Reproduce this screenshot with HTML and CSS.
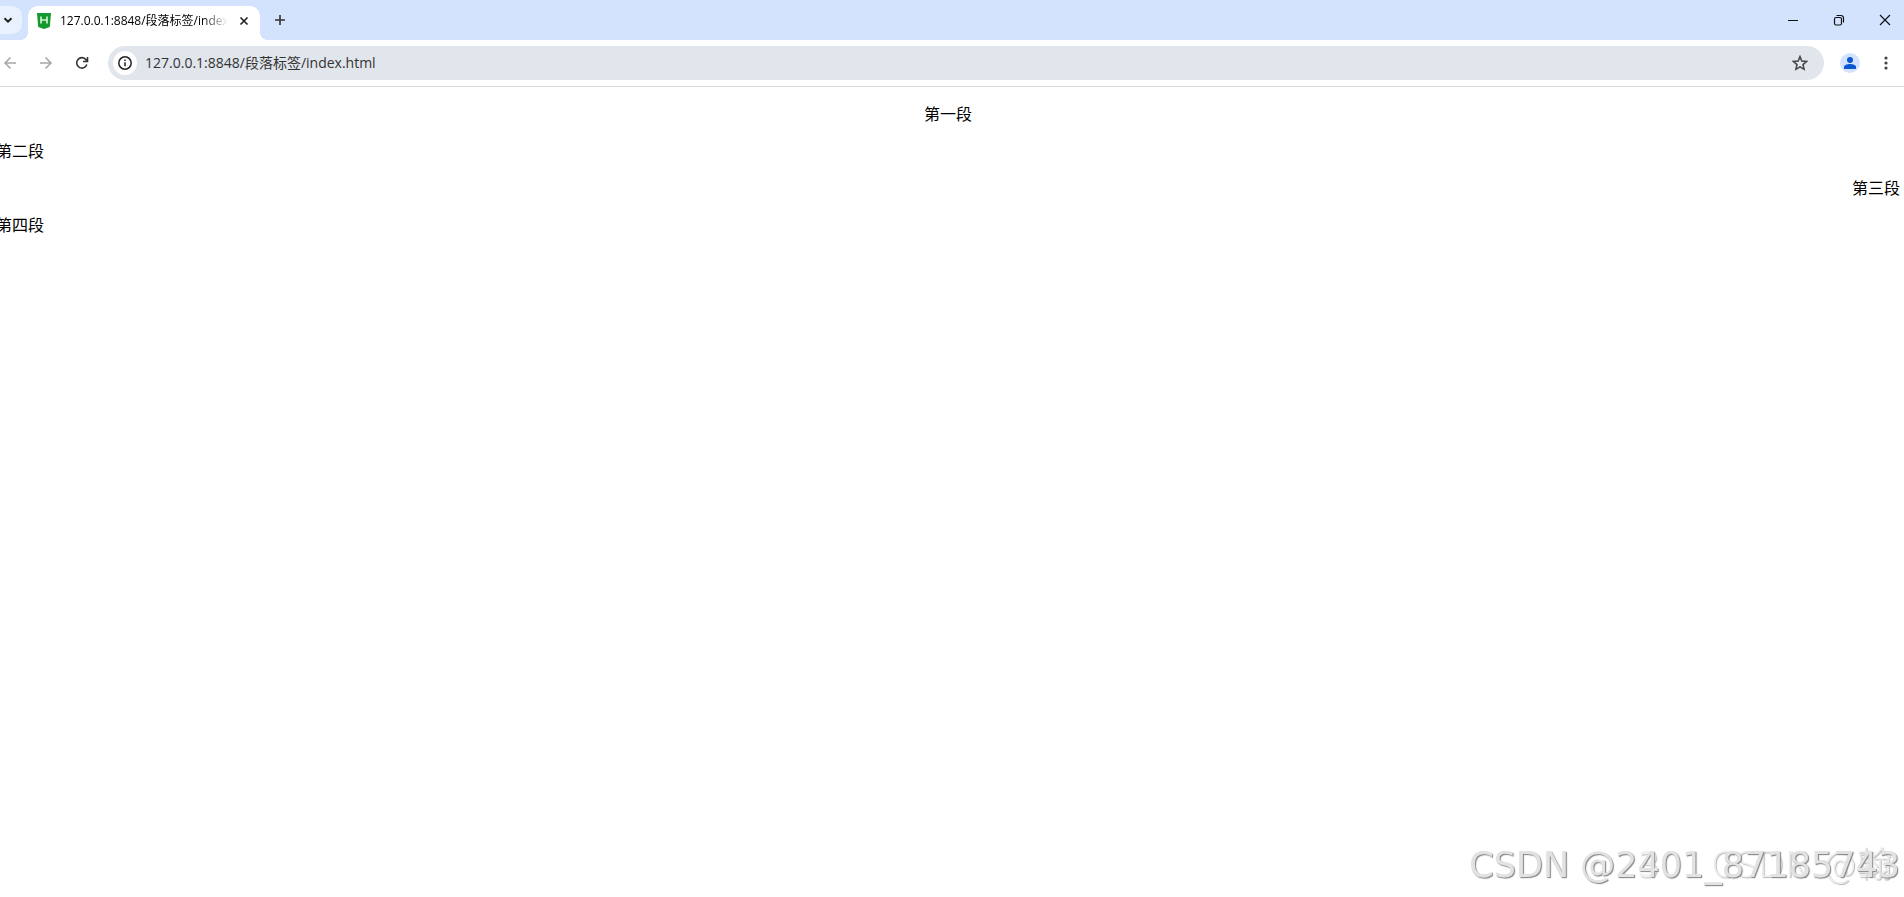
FILE: index.html
```html
<!DOCTYPE html>
<html lang="zh-CN">
<head>
    <meta charset="UTF-8">
    <meta name="viewport" content="width=device-width, initial-scale=1.0">
    <title>127.0.0.1:8848/段落标签/index.html</title>
    <link rel="stylesheet" href="styles.css">
</head>
<body>
    <!-- Tab strip -->
    <header class="tab-strip">
        <button class="tab-search" type="button" aria-label="搜索标签页">
            <svg width="16" height="16" viewBox="0 0 16 16"><path d="M4.5 6.2 8 9.7l3.5-3.5" fill="none" stroke="#1f1f1f" stroke-width="2"/></svg>
        </button>
        <div class="tab">
            <svg class="favicon" width="14" height="16" viewBox="0 0 14 16">
                <path d="M0 0h14l-1.2 14L7 16l-5.8-2z" fill="#14992f"/>
                <path d="M4 3.5v7M10 3.5v7M4 7h6" fill="none" stroke="#d9f5d5" stroke-width="1.6"/>
            </svg>
            <span class="tab-title">127.0.0.1:8848/段落标签/index.html</span>
            <button class="icon-button tab-close" type="button" aria-label="关闭">
                <svg width="16" height="16" viewBox="0 0 16 16"><path d="m4.5 4.5 7 7m0-7-7 7" stroke="#1f1f1f" stroke-width="1.6"/></svg>
            </button>
        </div>
        <button class="icon-button new-tab" type="button" aria-label="新标签页">
            <svg width="16" height="16" viewBox="0 0 16 16"><path d="M8 3v10M3 8h10" stroke="#333" stroke-width="1.6"/></svg>
        </button>
        <div class="window-controls">
            <button class="icon-button" type="button" aria-label="最小化">
                <svg width="12" height="12" viewBox="0 0 12 12"><path d="M1 6.5h10" stroke="#111"/></svg>
            </button>
            <button class="icon-button" type="button" aria-label="还原">
                <svg width="12" height="12" viewBox="0 0 12 12"><rect x="1.5" y="3.5" width="7" height="7.5" rx="1.5" fill="none" stroke="#111" stroke-width="1.2"/><path d="M3.5 1.5H8A2.5 2.5 0 0 1 10.5 4v4.5" fill="none" stroke="#111" stroke-width="1.2"/></svg>
            </button>
            <button class="icon-button" type="button" aria-label="关闭窗口">
                <svg width="12" height="12" viewBox="0 0 12 12"><path d="m1 1 10 10m0-10L1 11" stroke="#111" stroke-width="1.2"/></svg>
            </button>
        </div>
    </header>

    <!-- Toolbar -->
    <nav class="toolbar">
        <button class="icon-button" type="button" aria-label="后退">
            <svg width="16" height="16" viewBox="0 0 16 16"><path d="M14 8H3m5.5-5.5L3 8l5.5 5.5" fill="none" stroke="#a6a6a6" stroke-width="1.5"/></svg>
        </button>
        <button class="icon-button" type="button" aria-label="前进">
            <svg width="16" height="16" viewBox="0 0 16 16"><path d="M2 8h11M7.5 2.5 13 8l-5.5 5.5" fill="none" stroke="#a6a6a6" stroke-width="1.5"/></svg>
        </button>
        <button class="icon-button" type="button" aria-label="重新加载">
            <svg width="16" height="16" viewBox="0 0 16 16"><path d="M12.8 9.5A5.2 5.2 0 1 1 12 4.7L13.5 6M13.5 2v4.5H9" fill="none" stroke="#333" stroke-width="1.6"/></svg>
        </button>
        <div class="address-bar">
            <button class="site-info" type="button" aria-label="网站信息">
                <svg width="16" height="16" viewBox="0 0 16 16"><circle cx="8" cy="8" r="6.2" fill="none" stroke="#222" stroke-width="1.5"/><path d="M8 7.2v4M8 4.5V6" stroke="#222" stroke-width="1.5"/></svg>
            </button>
            <input class="address" type="text" value="127.0.0.1:8848/段落标签/index.html" aria-label="地址栏">
            <button class="icon-button" type="button" aria-label="收藏">
                <svg width="16" height="16" viewBox="0 0 16 16"><path d="m8 1.5 1.8 4.5 4.9.4L11 9.6l1.1 4.7L8 11.8l-4.1 2.5L5 9.6 1.3 6.4 6.2 6z" fill="none" stroke="#444" stroke-width="1.5"/></svg>
            </button>
        </div>
        <button class="profile" type="button" aria-label="个人资料">
            <svg width="14" height="14" viewBox="0 0 14 14"><circle cx="7" cy="4" r="3" fill="#0b57d0"/><path d="M1 13v-2c0-4 12-4 12 0v2z" fill="#0b57d0"/></svg>
        </button>
        <button class="icon-button menu" type="button" aria-label="菜单">
            <svg width="16" height="16" viewBox="0 0 16 16" fill="#444"><circle cx="8" cy="3" r="1.6"/><circle cx="8" cy="8" r="1.6"/><circle cx="8" cy="13" r="1.6"/></svg>
        </button>
    </nav>

    <!-- Page content -->
    <main class="page">
        <p class="center">第一段</p>
        <p>第二段</p>
        <p class="right">第三段</p>
        <p>第四段</p>
    </main>

    <!-- Stacked watermarks -->
    <div class="watermark watermark-author">CSDN @翰</div>
    <div class="watermark watermark-back">CSDN @2301_87185713</div>
    <div class="watermark">CSDN @2401_87185743</div>
</body>
</html>
```
FILE: styles.css
```css
* {
    box-sizing: border-box;
}
body {
    margin: 0;
    background: #fff;
    color: #000;
    font-family: "Open Sans", "Noto Sans CJK SC", sans-serif;
}
button {
    display: flex;
    align-items: center;
    justify-content: center;
    flex-shrink: 0;
    padding: 0;
    border: none;
    background: none;
}
svg {
    display: block;
    flex-shrink: 0;
}
.tab-strip {
    display: flex;
    align-items: flex-end;
    height: 40px;
    overflow: hidden;
    background: #d3e3fd;
}
.tab-search {
    width: 22px;
    height: 28px;
    margin-bottom: 6px;
    padding-right: 6px;
    background: #e9f1fe;
    border-radius: 0 10px 10px 0;
}
.tab {
    position: relative;
    display: flex;
    align-items: center;
    width: 232px;
    height: 34px;
    margin-left: 6px;
    padding: 0 8px 4px 9px;
    background: #fff;
    border-radius: 10px 10px 0 0;
}
/* flared bottom corners of the active tab */
.tab::before,
.tab::after {
    content: "";
    position: absolute;
    bottom: 0;
    width: 8px;
    height: 8px;
}
.tab::before {
    left: -8px;
    background: radial-gradient(circle at 0 0, transparent 8px, #fff 8px);
}
.tab::after {
    right: -8px;
    background: radial-gradient(circle at 100% 0, transparent 8px, #fff 8px);
}
.tab-title {
    flex: 1;
    margin: 0 8px 0 9px;
    overflow: hidden;
    white-space: nowrap;
    font-size: 12px;
    line-height: 18px;
    mask-image: linear-gradient(to right, #000 85%, transparent);
}
.icon-button {
    width: 36px;
    height: 34px;
}
.tab-close {
    width: 16px;
    height: 16px;
}
.new-tab {
    width: 40px;
    height: 40px;
}
.window-controls {
    display: flex;
    margin-left: auto;
    margin-right: -4px;
}
.window-controls .icon-button {
    width: 46px;
    height: 40px;
}
.toolbar {
    display: flex;
    align-items: center;
    height: 47px;
    border-bottom: 1px solid #dcdcdc;
}
.toolbar > .icon-button:first-child {
    width: 28px;
    padding-right: 8px;
}
.address-bar {
    display: flex;
    flex: 1;
    align-items: center;
    height: 34px;
    margin-left: 8px;
    padding: 0 6px 0 5px;
    background: #e1e5ec;
    border-radius: 17px;
}
.site-info {
    width: 24px;
    height: 24px;
    border-radius: 50%;
    background: #fff;
}
.address {
    flex: 1;
    min-width: 0;
    padding: 0 8px;
    border: none;
    outline: none;
    background: none;
    color: #333;
    font-family: inherit;
    font-size: 14px;
    line-height: 20px;
}
.profile {
    width: 20px;
    height: 20px;
    margin: 0 8px 0 16px;
    border-radius: 50%;
    background: #d3e3fd;
}
.page {
    padding: 16px 4px 0 0;
}
.page p {
    margin: 0 0 16px -4px;
    font-family: "Noto Sans CJK SC", sans-serif;
    font-size: 16px;
    line-height: 21px;
}
.page .center {
    text-align: center;
}
.page .right {
    text-align: right;
}
.watermark {
    position: fixed;
    right: 4px;
    bottom: 10px;
    color: #e2e2e2;
    font-family: "DejaVu Sans", "Noto Sans CJK SC", sans-serif;
    font-size: 35px;
    line-height: 44px;
    white-space: nowrap;
    text-shadow: 1px 1px 1px #888;
}
.watermark-author {
    right: 12px;
    font-weight: 200;
    opacity: 0.6;
}
.watermark-back {
    opacity: 0.5;
}
```
